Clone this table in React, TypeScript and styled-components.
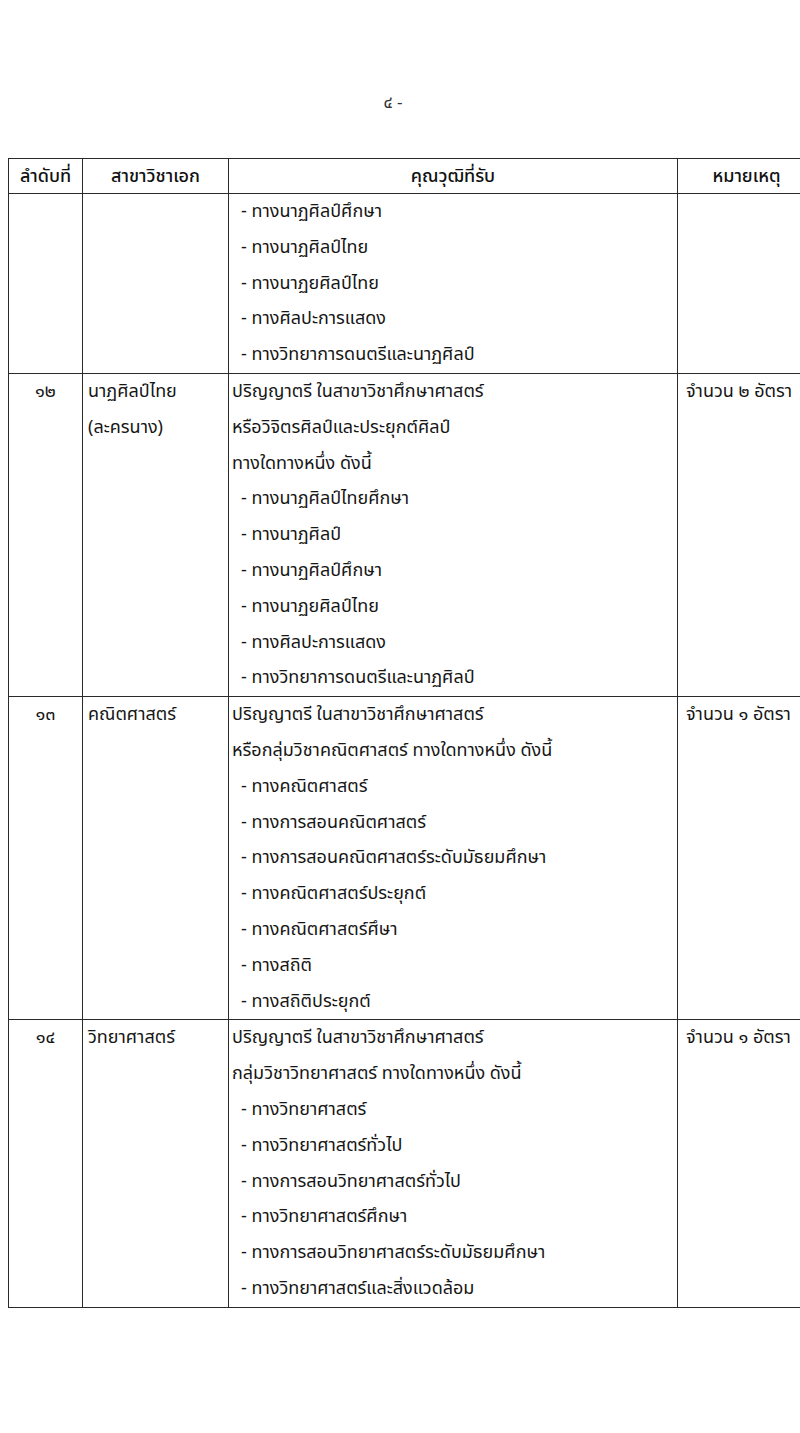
import React from 'react';
import styled, { createGlobalStyle } from 'styled-components';

const GlobalStyle = createGlobalStyle`
  html, body {
    margin: 0;
    padding: 0;
    background: #ffffff;
  }
  body {
    font-family: "Noto Sans Thai", "DejaVu Sans", "Liberation Sans", sans-serif;
    color: #161616;
    width: 800px;
    overflow: hidden;
  }
`;

const Page = styled.div`
  width: 800px;
  height: 1433px;
  overflow: hidden;
  padding-top: 90px;
  box-sizing: border-box;
`;

const PageNumber = styled.div`
  text-align: center;
  font-size: 17px;
  line-height: 26px;
  height: 68px;
  padding-right: 14px;
  color: #333;
`;

const Table = styled.table`
  margin-left: 8px;
  width: 806px;
  border-collapse: collapse;
  table-layout: fixed;
  font-size: 18px;
`;

const HeadCell = styled.th<{ $w: number }>`
  width: ${(p) => p.$w}px;
  height: 34px;
  border: 1.5px solid #2a2a2a;
  font-weight: 500;
  text-align: center;
  vertical-align: middle;
  padding: 0;
  color: #111;
`;

const Cell = styled.td<{ $align?: string; $pad?: number }>`
  border: 1.5px solid #2a2a2a;
  vertical-align: top;
  text-align: ${(p) => p.$align || 'left'};
  padding: 0 0 0 ${(p) => p.$pad ?? 6}px;
  line-height: 35.8px;
`;

const Line = styled.div<{ $indent?: boolean }>`
  white-space: nowrap;
  padding-left: ${(p) => (p.$indent ? 9 : 0)}px;
`;

interface Row {
  no: string;
  major: string[];
  quals: { text: string; indent?: boolean }[];
  note: string;
}

const dash = (t: string) => ({ text: `- ${t}`, indent: true });

const rows: Row[] = [
  {
    no: '',
    major: [],
    quals: [
      dash('ทางนาฏศิลป์ศึกษา'),
      dash('ทางนาฏศิลป์ไทย'),
      dash('ทางนาฏยศิลป์ไทย'),
      dash('ทางศิลปะการแสดง'),
      dash('ทางวิทยาการดนตรีและนาฏศิลป์'),
    ],
    note: '',
  },
  {
    no: '๑๒',
    major: ['นาฏศิลป์ไทย', '(ละครนาง)'],
    quals: [
      { text: 'ปริญญาตรี ในสาขาวิชาศึกษาศาสตร์' },
      { text: 'หรือวิจิตรศิลป์และประยุกต์ศิลป์' },
      { text: 'ทางใดทางหนึ่ง ดังนี้' },
      dash('ทางนาฏศิลป์ไทยศึกษา'),
      dash('ทางนาฏศิลป์'),
      dash('ทางนาฏศิลป์ศึกษา'),
      dash('ทางนาฏยศิลป์ไทย'),
      dash('ทางศิลปะการแสดง'),
      dash('ทางวิทยาการดนตรีและนาฏศิลป์'),
    ],
    note: 'จำนวน ๒ อัตรา',
  },
  {
    no: '๑๓',
    major: ['คณิตศาสตร์'],
    quals: [
      { text: 'ปริญญาตรี ในสาขาวิชาศึกษาศาสตร์' },
      { text: 'หรือกลุ่มวิชาคณิตศาสตร์ ทางใดทางหนึ่ง ดังนี้' },
      dash('ทางคณิตศาสตร์'),
      dash('ทางการสอนคณิตศาสตร์'),
      dash('ทางการสอนคณิตศาสตร์ระดับมัธยมศึกษา'),
      dash('ทางคณิตศาสตร์ประยุกต์'),
      dash('ทางคณิตศาสตร์ศึษา'),
      dash('ทางสถิติ'),
      dash('ทางสถิติประยุกต์'),
    ],
    note: 'จำนวน ๑ อัตรา',
  },
  {
    no: '๑๔',
    major: ['วิทยาศาสตร์'],
    quals: [
      { text: 'ปริญญาตรี ในสาขาวิชาศึกษาศาสตร์' },
      { text: 'กลุ่มวิชาวิทยาศาสตร์ ทางใดทางหนึ่ง ดังนี้' },
      dash('ทางวิทยาศาสตร์'),
      dash('ทางวิทยาศาสตร์ทั่วไป'),
      dash('ทางการสอนวิทยาศาสตร์ทั่วไป'),
      dash('ทางวิทยาศาสตร์ศึกษา'),
      dash('ทางการสอนวิทยาศาสตร์ระดับมัธยมศึกษา'),
      dash('ทางวิทยาศาสตร์และสิ่งแวดล้อม'),
    ],
    note: 'จำนวน ๑ อัตรา',
  },
];

export default function App() {
  return (
    <>
      <GlobalStyle />
      <Page>
        <PageNumber>๔ -</PageNumber>
        <Table>
          <thead>
            <tr>
              <HeadCell $w={73}>ลำดับที่</HeadCell>
              <HeadCell $w={145}>สาขาวิชาเอก</HeadCell>
              <HeadCell $w={448}>คุณวุฒิที่รับ</HeadCell>
              <HeadCell $w={137}>หมายเหตุ</HeadCell>
            </tr>
          </thead>
          <tbody>
            {rows.map((row, i) => (
              <tr key={i}>
                <Cell $align="center" $pad={0}>
                  {row.no}
                </Cell>
                <Cell $pad={5}>
                  {row.major.map((m) => (
                    <Line key={m}>{m}</Line>
                  ))}
                </Cell>
                <Cell $pad={3}>
                  {row.quals.map((q, j) => (
                    <Line key={j} $indent={q.indent}>
                      {q.text}
                    </Line>
                  ))}
                </Cell>
                <Cell $pad={8}>{row.note}</Cell>
              </tr>
            ))}
          </tbody>
        </Table>
      </Page>
    </>
  );
}
